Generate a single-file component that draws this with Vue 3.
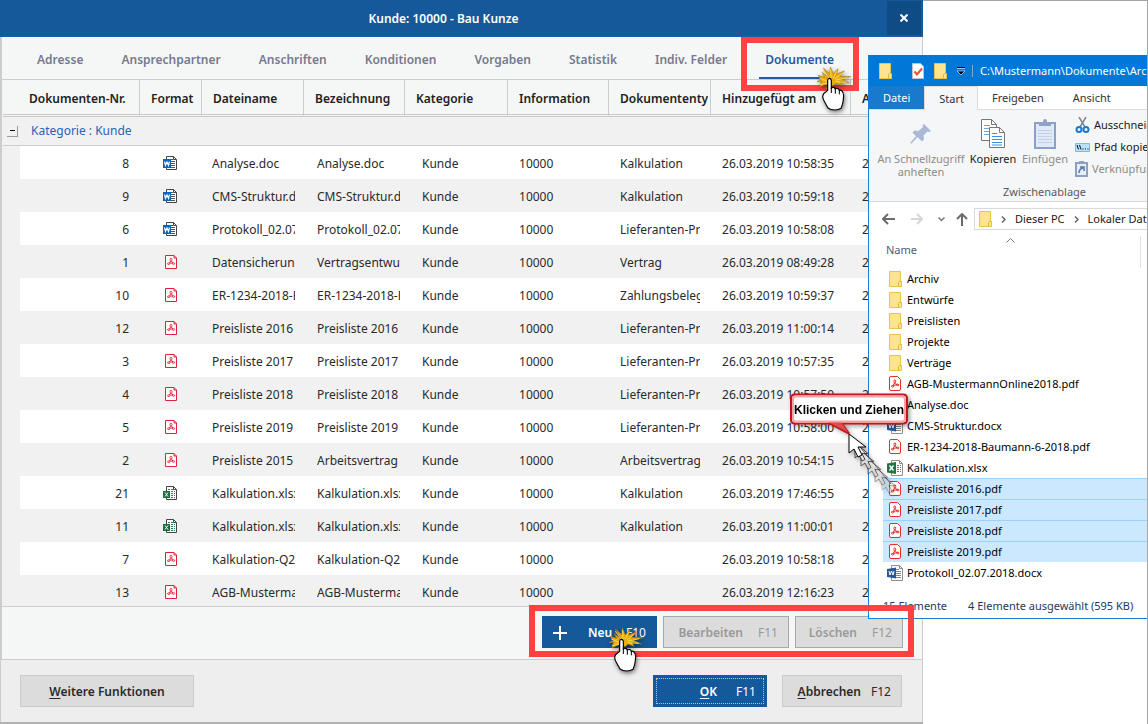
<script setup>
const tabs = ['Adresse', 'Ansprechpartner', 'Anschriften', 'Konditionen', 'Vorgaben', 'Statistik', 'Indiv. Felder', 'Dokumente']

const columns = ['Format', 'Dateiname', 'Bezeichnung', 'Kategorie', 'Information', 'Dokumententyp', 'Hinzugefügt am', 'A']

const rows = [
  [8, 'word', 'Analyse.doc', 'Analyse.doc', 'Kalkulation', '26.03.2019 10:58:35', '2'],
  [9, 'word', 'CMS-Struktur.docx', 'CMS-Struktur.docx', 'Kalkulation', '26.03.2019 10:59:18', '2'],
  [6, 'word', 'Protokoll_02.07.2018', 'Protokoll_02.07.2018', 'Lieferanten-Preis', '26.03.2019 10:58:08', '2'],
  [1, 'pdf', 'Datensicherung', 'Vertragsentwurf', 'Vertrag', '26.03.2019 08:49:28', '2'],
  [10, 'pdf', 'ER-1234-2018-Baumann', 'ER-1234-2018-Baumann', 'Zahlungsbelege', '26.03.2019 10:59:37', '2'],
  [12, 'pdf', 'Preisliste 2016', 'Preisliste 2016', 'Lieferanten-Preis', '26.03.2019 11:00:14', '2'],
  [3, 'pdf', 'Preisliste 2017', 'Preisliste 2017', 'Lieferanten-Preis', '26.03.2019 10:57:35', '2'],
  [4, 'pdf', 'Preisliste 2018', 'Preisliste 2018', 'Lieferanten-Preis', '26.03.2019 10:57:50', '2'],
  [5, 'pdf', 'Preisliste 2019', 'Preisliste 2019', 'Lieferanten-Preis', '26.03.2019 10:58:00', '2'],
  [2, 'pdf', 'Preisliste 2015', 'Arbeitsvertrag', 'Arbeitsvertrag', '26.03.2019 10:54:15', ''],
  [21, 'excel', 'Kalkulation.xlsx', 'Kalkulation.xlsx', 'Kalkulation', '26.03.2019 17:46:55', '2'],
  [11, 'excel', 'Kalkulation.xlsx', 'Kalkulation.xlsx', 'Kalkulation', '26.03.2019 11:00:01', '2'],
  [7, 'pdf', 'Kalkulation-Q2', 'Kalkulation-Q2', '', '26.03.2019 10:58:18', '2'],
  [13, 'pdf', 'AGB-Mustermann', 'AGB-Mustermann', '', '26.03.2019 12:16:23', '2']
]

const files = [
  ['folder', 'Archiv'],
  ['folder', 'Entwürfe'],
  ['folder', 'Preislisten'],
  ['folder', 'Projekte'],
  ['folder', 'Verträge'],
  ['acro', 'AGB-MustermannOnline2018.pdf'],
  ['doc', 'Analyse.doc'],
  ['doc', 'CMS-Struktur.docx'],
  ['acro', 'ER-1234-2018-Baumann-6-2018.pdf'],
  ['xls', 'Kalkulation.xlsx'],
  ['acro', 'Preisliste 2016.pdf', true],
  ['acro', 'Preisliste 2017.pdf', true],
  ['acro', 'Preisliste 2018.pdf', true],
  ['acro', 'Preisliste 2019.pdf', true],
  ['doc', 'Protokoll_02.07.2018.docx']
]
</script>

<template>
  <div class="desktop">
    <svg class="sprite" aria-hidden="true">
      <symbol id="i-word" viewBox="0 0 15 14">
        <path d="M3.5 3V.5h7l3 3v10h-10V11" fill="#fff" stroke="#444" />
        <path d="M10.5.5v3h3" fill="none" stroke="#444" />
        <path d="M8 3.5h2M8 5.5h4M8 7.5h4M8 9.5h4M8 11.5h4" stroke="#555" />
        <rect y="3" width="8" height="9" fill="#0f63b5" />
        <path d="M1.500 5.500l1 4 1.500-3.500 1.500 3.500 1-4" fill="none" stroke="#fff" stroke-width="1.200" />
      </symbol>
      <symbol id="i-excel" viewBox="0 0 15 14">
        <path d="M3.500 5V.5h7l3 3v10h-10V12" fill="#fff" stroke="#444" />
        <path d="M10.500.5v3h3" fill="none" stroke="#444" />
        <path d="M5 3.500h5M8 5.500h4M8 7.500h4M8 9.500h4M8 11.500h4" stroke="#33805a" stroke-dasharray="2 1" />
        <rect y="5" width="7" height="7" fill="#17703f" />
        <path d="M2 6.500l3 4M5 6.500l-3 4" stroke="#fff" />
      </symbol>
      <symbol id="i-pdf" viewBox="0 0 12 14">
        <path d="M.5.5h8.500l2.500 2.500v10.500h-11z" fill="#fff" stroke="#e0203c" />
        <path d="M9 .5v2.500h2.500" fill="none" stroke="#e0203c" />
        <g fill="none" stroke="#e0203c" stroke-width=".9">
          <ellipse cx="6" cy="4.700" rx="1" ry="1.500" />
          <path d="M5.600 6L4.500 8M6.400 6l1.500 2M4.500 8h3.400" />
          <ellipse cx="3.700" cy="8.700" rx="1.200" ry=".8" />
          <ellipse cx="8.500" cy="8.500" rx="1.200" ry=".8" />
        </g>
      </symbol>
      <symbol id="i-acro" viewBox="0 0 12 15">
        <path d="M2 .5h6.500l3 3V13q0 1.500-1.500 1.500H2Q.5 14.500.5 13V2Q.5.500 2 .5z" fill="#fff" stroke="#ee2b2b" />
        <g fill="none" stroke="#e32626">
          <ellipse cx="5.800" cy="5.400" rx=".9" ry="1.500" />
          <path d="M5.600 6.800L4.300 9.500M6.200 6.800l2 2.200M4.300 9.400l3.800-.7" />
          <ellipse cx="3.600" cy="10.200" rx="1.200" ry=".8" />
          <ellipse cx="8.800" cy="9" rx="1.200" ry=".8" />
        </g>
      </symbol>
      <symbol id="i-doc" viewBox="0 0 16 16">
        <path d="M4.500.5h8l3 3v12h-11z" fill="#fff" stroke="#8d8d8d" />
        <path d="M12.500.5v3h3M9 4.500h3M9 6.500h5M9 8.500h5M9 10.500h5M9 12.500h5" fill="none" stroke="#7e8794" />
        <path d="M0 4l9-1.500v11L0 12z" fill="#2b579a" />
        <path d="M2 6l1 4 1.500-4 1.500 4 1-4" fill="none" stroke="#fff" />
      </symbol>
      <symbol id="i-xls" viewBox="0 0 16 16">
        <path d="M4.500.5h8l3 3v12h-11z" fill="#fff" stroke="#8d8d8d" />
        <path d="M12.500.5v3h3" fill="none" stroke="#8d8d8d" />
        <path d="M10 5.500h4M10 7.500h4M10 9.500h4M10 11.500h4" stroke="#3d9a68" stroke-dasharray="2 1" />
        <path d="M0 3.500L9 2v12l-9-1.500z" fill="#217346" />
        <path d="M2.500 5.500l4 5M6.500 5.500l-4 5" stroke="#fff" stroke-width="1.400" />
      </symbol>
      <symbol id="i-folder" viewBox="0 0 13 16">
        <path d="M.5.500h11v10h1v5H.500z" fill="#ffe48e" stroke="#e9c34f" />
        <path d="M9.500 15.500v-4l1-1h2" fill="none" stroke="#e0b434" />
      </symbol>
      <symbol id="i-hand" viewBox="0 0 120 144">
        <path d="M41 38L22 6l19 17L43 3l9 21L66 8l-5 17 24-10-15 16 34 1-31 6 27 13-28-5 6 12-18-7-9 8-7-6-12 18 3-20-23 11L17 45 3 47l14-7L6 28l20 6-7-14z" fill="#e9ac13" stroke="#b57f0a" stroke-width="2" />
        <path d="M42 40l-20-27M45 38l-1-28M52 36l10-20M57 39l22-18M60 42l34-7M58 47l34 2M33 46L10 36M34 52L12 56" stroke="#ffd850" stroke-width="3" />
        <path d="M35 43q0-6 5-6t6 6v25q2-5 6-4 5 0 6 6 2-4 6-3 5 1 6 7 3-3 7 0 6 4 6 15-1 18-4 27l-4 11q-8 5-18 5-14 0-21-6-5-9-10-18-6-9-6-17 1-8 8-12l7-6z" fill="#fff" stroke="#000" stroke-width="3.500" stroke-linejoin="round" />
        <path d="M46 65v16M58 70v13M70 74v11" stroke="#000" stroke-width="3" />
      </symbol>
    </svg>

    <main class="dialog">
      <header class="titlebar">
        <h1>Kunde: 10000 - Bau Kunze</h1>
        <button class="close" aria-label="Schließen">
          <svg width="8" height="8" viewBox="0 0 8 8"><path d="M.5.5l7 7M7.500.5l-7 7" stroke="#fff" stroke-width="2" /></svg>
        </button>
      </header>

      <nav class="tabs">
        <button v-for="t in tabs" :key="t" :class="{ active: t === 'Dokumente' }">{{ t }}</button>
      </nav>

      <section class="grid">
        <table>
          <colgroup>
            <col class="c-indent" /><col class="c-nr" /><col class="c-format" /><col class="c-name" /><col class="c-desc" />
            <col class="c-cat" /><col class="c-info" /><col class="c-type" /><col class="c-date" /><col />
          </colgroup>
          <thead>
            <tr>
              <th colspan="2" class="first"><div>Dokumenten-Nr.</div></th>
              <th v-for="c in columns" :key="c"><div>{{ c }}</div></th>
            </tr>
          </thead>
          <tbody>
            <tr class="group">
              <td colspan="10">
                <div class="group-line">
                  <button class="collapse" aria-label="Gruppe zuklappen"><i></i></button>
                  <span>Kategorie : Kunde</span>
                </div>
              </td>
            </tr>
            <tr v-for="r in rows" :key="r[0]" class="item">
              <td class="indent"></td>
              <td class="nr">{{ r[0] }}</td>
              <td class="format">
                <svg :class="['ficon', r[1]]"><use :href="'#i-' + r[1]" /></svg>
              </td>
              <td class="name"><div>{{ r[2] }}</div></td>
              <td class="desc"><div>{{ r[3] }}</div></td>
              <td class="cat"><div>Kunde</div></td>
              <td><div>10000</div></td>
              <td><div>{{ r[4] }}</div></td>
              <td><div>{{ r[5] }}</div></td>
              <td><div>{{ r[6] }}</div></td>
            </tr>
          </tbody>
        </table>
      </section>

      <section class="toolbar">
        <button class="btn primary new">
          <svg width="14" height="14" viewBox="0 0 14 14"><path d="M7 0v14M0 7h14" stroke="#fff" stroke-width="2" /></svg>
          <b>Neu</b><span>F10</span>
        </button>
        <button class="btn edit" disabled><b>Bearbeiten</b><span>F11</span></button>
        <button class="btn delete" disabled><b>Löschen</b><span>F12</span></button>
      </section>

      <footer class="footer">
        <button class="btn soft more"><b><u>W</u>eitere Funktionen</b></button>
        <button class="btn primary ok"><b><u>O</u>K</b><span>F11</span></button>
        <button class="btn soft cancel"><b><u>A</u>bbrechen</b><span>F12</span></button>
      </footer>
    </main>

    <aside class="explorer">
      <header class="ex-title">
        <svg class="folder"><use href="#i-folder" /></svg>
        <i class="sep"></i>
        <svg width="12" height="16" viewBox="0 0 12 16">
          <path d="M.5.500h8l3 3v12H.500z" fill="#fff" stroke="#b9c4d0" />
          <path d="M2.500 8.500l2.500 3 5-6" fill="none" stroke="#e8502c" stroke-width="2" />
        </svg>
        <svg class="folder"><use href="#i-folder" /></svg>
        <span class="quick">
          <svg width="8" height="8" viewBox="0 0 8 8"><path d="M0 .5h8" stroke="#000" /><path d="M0 1.500h8M0 4h8L4 8z" stroke="#fff" stroke-width=".6" fill="#000" /></svg>
          <i class="sep"></i>
          <span>C:\Mustermann\Dokumente\Archiv</span>
        </span>
      </header>
      <nav class="ex-tabs">
        <button class="file">Datei</button>
        <button class="current">Start</button>
        <button class="share">Freigeben</button>
        <button>Ansicht</button>
      </nav>
      <section class="ribbon">
        <div class="ribbon-tools">
          <button class="tool pin" disabled>
            <svg width="22" height="22" viewBox="0 0 22 22"><path d="M14 1l7 7-2 1-1.500-.5-4 4 .5 4-2 2-4.500-4.500L1 21l-.5-1.500L6 13 2.500 9.500l2-2 4 .5 4.500-4-.5-1.500z" fill="#a9b9d6" /></svg>
            <span>An Schnellzugriff<br />anheften</span>
          </button>
          <button class="tool copy">
            <svg width="26" height="30" viewBox="0 0 26 30">
              <path d="M1.500.5h10l5 5v16h-15z" fill="#fff" stroke="#777" /><path d="M11.500.5v5h5" fill="none" stroke="#777" />
              <path d="M4 6.500h6M4 9.500h10M4 12.500h10M4 15.500h10" stroke="#70a9dc" />
              <path d="M9.500 8.500h10l5 5v15h-15z" fill="#fff" stroke="#777" /><path d="M19.500 8.500v5h5" fill="none" stroke="#777" />
              <path d="M12 14.500h5M12 17.500h10M12 20.500h10M12 23.500h10M12 26h10" stroke="#3d92dc" />
            </svg>
            <span>Kopieren</span>
          </button>
          <button class="tool paste" disabled>
            <svg width="22" height="30" viewBox="0 0 22 30">
              <path d="M1 4h20v25H1z" fill="#e0e9f6" stroke="#8ba0c6" stroke-width="2" />
              <path d="M5 7V3h4q0-3 2-3t2 3h4v4z" fill="#8ea3c6" />
              <path d="M4 11.500h14M4 14.500h14M4 17.500h14M4 20.500h14M4 23.500h14" stroke="#c3cfe4" />
            </svg>
            <span>Einfügen</span>
          </button>
          <div class="small-tools">
            <button>
              <svg width="15" height="16" viewBox="0 0 15 16"><path d="M4 0l6 10M11 0L5 10" stroke="#7b8792" stroke-width="1.500" /><circle cx="4" cy="12.500" r="2.500" fill="none" stroke="#1979ca" stroke-width="2" /><circle cx="11" cy="12.500" r="2.500" fill="none" stroke="#1979ca" stroke-width="2" /></svg>
              Ausschneiden
            </button>
            <button>
              <svg width="15" height="9" viewBox="0 0 15 9"><path d="M.5.500h14v8H.500z" fill="#b8e2fb" stroke="#7fb9dd" /><path d="M2 2l1.500 4.500M4.500 2L6 6.500M7.500 6h1M10 6h1M12.500 6h1" stroke="#111" /></svg>
              Pfad kopieren
            </button>
            <button disabled>
              <svg width="13" height="16" viewBox="0 0 13 16"><path d="M1 2h11v13H1z" fill="#e6edf8" stroke="#8da0c2" stroke-width="2" /><path d="M4 0h5v3H4z" fill="#8da0c2" /><path d="M4 12q0-4 4-5M5 6h4v4" fill="none" stroke="#5a76ab" stroke-width="1.500" /></svg>
              Verknüpfung
            </button>
          </div>
        </div>
        <div class="ribbon-label">Zwischenablage</div>
      </section>
      <nav class="address">
        <button aria-label="Zurück"><svg width="13" height="12" viewBox="0 0 13 12"><path d="M13 6H1M6 1L1 6l5 5" fill="none" stroke="#6c6c6c" stroke-width="2" /></svg></button>
        <button aria-label="Vorwärts"><svg width="13" height="12" viewBox="0 0 13 12"><path d="M1 6h11M7 1l5 5-5 5" fill="none" stroke="#d6d6d6" stroke-width="2" /></svg></button>
        <button aria-label="Verlauf"><svg width="7" height="5" viewBox="0 0 7 5"><path d="M.5.500l3 3 3-3" fill="none" stroke="#777" stroke-width="1.500" /></svg></button>
        <button class="up" aria-label="Nach oben"><svg width="12" height="13" viewBox="0 0 12 13"><path d="M6 13V1M1 6l5-5 5 5" fill="none" stroke="#6c6c6c" stroke-width="2" /></svg></button>
        <div class="crumbs">
          <svg class="folder"><use href="#i-folder" /></svg>
          <svg class="chev" width="5" height="7" viewBox="0 0 5 7"><path d="M1 .5l3 3-3 3" fill="none" stroke="#666" stroke-width="1.500" /></svg>
          <span>Dieser PC</span>
          <svg class="chev" width="5" height="7" viewBox="0 0 5 7"><path d="M1 .5l3 3-3 3" fill="none" stroke="#666" stroke-width="1.500" /></svg>
          <span>Lokaler Datenträger</span>
        </div>
      </nav>
      <div class="list-head">
        <span>Name</span>
        <svg width="9" height="5" viewBox="0 0 9 5"><path d="M.5 4.500l4-4 4 4" fill="none" stroke="#777" /></svg>
      </div>
      <ul class="files">
        <li v-for="f in files" :key="f[1]" :class="{ selected: f[2] }">
          <span class="slot"><svg :class="f[0]"><use :href="'#i-' + f[0]" /></svg></span>{{ f[1] }}
        </li>
      </ul>
      <footer class="status">
        <span>15 Elemente</span>
        <span>4 Elemente ausgewählt (595 KB)</span>
      </footer>
    </aside>

    <div class="mark mark-tab"></div>
    <div class="mark mark-actions"></div>
    <svg class="hand hand-tab"><use href="#i-hand" /></svg>
    <svg class="hand hand-new"><use href="#i-hand" /></svg>

    <div class="callout">
      <svg width="120" height="110" viewBox="0 0 120 110" aria-hidden="true">
        <defs>
          <linearGradient id="pointer" x1="0" y1="0" x2="0" y2="1"><stop offset="0" stop-color="#fff" /><stop offset="1" stop-color="#ddd" /></linearGradient>
          <path id="arrow" d="M0 0v19l5-4 4 8 4-2-4-8h8z" />
          <path id="arrow-small" d="M0 0v15l4-3 3 6 3-1.500-3-6h6z" />
        </defs>
        <g fill="url(#pointer)" stroke="#333">
          <use href="#arrow-small" x="92" y="82" opacity=".3" />
          <use href="#arrow-small" x="85" y="74" opacity=".45" />
          <use href="#arrow-small" x="78" y="66" opacity=".6" />
          <use href="#arrow-small" x="71" y="58" opacity=".75" />
          <use href="#arrow-small" x="65" y="50" opacity=".9" />
          <path d="M59 41l42 50" opacity=".7" />
        </g>
        <use href="#arrow" x="59" y="41" fill="#fff" stroke="#000" />
        <path d="M5 1.500h108q4 0 4 4v21q0 4-4 4H52l7 10-19-10H5q-4 0-4-4v-21q0-4 4-4z" fill="#fff" stroke="#c3161c" stroke-width="2" />
        <path d="M38 29h13l7 10z" fill="#e24a4e" />
        <rect x="3" y="3.500" width="112" height="25" rx="3" fill="none" stroke="#f7a3a3" stroke-width="2" />
      </svg>
      <strong>Klicken und Ziehen</strong>
    </div>
  </div>
</template>

<style>
body {
  margin: 0;
}
</style>

<style scoped>
* {
  box-sizing: border-box;
}
.desktop {
  position: relative;
  height: 100vh;
  min-height: 480px;
  overflow: hidden;
  background: linear-gradient(#a5a5a5, #a5a5a5) top / 100% 1px no-repeat #fff;
  border-right: 1px solid #a5a5a5;
  font: 12px/16px "Noto Sans", "Open Sans", sans-serif;
  color: #2a2a2a;
}
.sprite {
  position: absolute;
  width: 0;
  height: 0;
}
button {
  margin: 0;
  padding: 0;
  border: 0;
  background: none;
  font: inherit;
  color: inherit;
}

/* Customer dialog */
.dialog {
  display: flex;
  flex-direction: column;
  height: 100%;
  margin-right: 224px;
  background: #eee;
  border-bottom: 2px solid #b2b2b2;
}
.titlebar {
  display: flex;
  flex: none;
  height: 37px;
  background: #15599a;
  border-bottom: 1px solid #1a5cad;
  color: #fff;
}
.titlebar h1 {
  flex: 1;
  margin: 0;
  font-size: 12px;
  line-height: 38px;
  font-weight: 600;
  text-align: center;
}
.close {
  display: flex;
  width: 34px;
  height: 34px;
  margin: 1px 2px 0 0;
  align-items: center;
  justify-content: center;
  background: #0f4c86;
}
.tabs {
  display: flex;
  flex: none;
  height: 43px;
  padding-left: 29px;
  gap: 26px;
  background: #f5f7f6;
  border: solid #cdcdcd;
  border-width: 0 1px 1px 2px;
}
.tabs button {
  padding: 5px 6px 0;
  font-weight: 600;
  color: #76798f;
  border-bottom: 2px solid transparent;
}
.tabs .active {
  color: #2659a8;
  border-color: #2659a8;
}
.grid {
  flex: 1 1 0;
  min-height: 0;
  overflow: hidden;
  border: solid #cdcdcd;
  border-width: 0 1px 1px 2px;
  background: #f1f1f1;
  padding-left: 1px;
}
table {
  width: 100%;
  table-layout: fixed;
  border-collapse: separate;
  border-spacing: 0;
}
.c-indent { width: 17px; }
.c-nr { width: 120px; }
.c-format { width: 62px; }
.c-name { width: 102px; }
.c-desc { width: 101px; }
.c-cat { width: 103px; }
.c-info { width: 101px; }
.c-type { width: 102px; }
.c-date { width: 140px; }
th {
  height: 37px;
  padding: 3px 2px 0 11px;
  text-align: left;
  font-weight: 600;
  color: #222;
  background: #f5f7f6;
  border-right: 1px solid #cdcdcd;
  border-bottom: 3px double #c9c9c9;
}
th.first {
  padding-left: 26px;
}
td {
  height: 33px;
  padding: 0 11px;
  background: #fff;
}
th div,
td div {
  overflow: hidden;
  white-space: nowrap;
}
.item:nth-child(odd) td {
  background: #f1f1f1;
}
.item .indent {
  background: #f1f1f1;
}
.group td {
  height: 29px;
  padding: 0 0 0 4px;
  background: #f1f1f1;
  border-bottom: 1px solid #cdcdcd;
}
.group-line {
  display: flex;
  align-items: center;
  gap: 13px;
  color: #2a62b8;
}
.collapse {
  display: flex;
  width: 11px;
  height: 11px;
  align-items: center;
  justify-content: center;
  border: solid #999;
  border-width: 0 1px 1px 0;
}
.collapse i {
  width: 5px;
  height: 1px;
  background: #111;
}
.item td {
  padding-top: 2px;
}
.item .nr {
  text-align: right;
}
.item .format {
  padding: 0 0 0 23px;
}
.item .name {
  padding-left: 10px;
  padding-right: 9px;
}
.item .desc {
  padding-left: 13px;
  padding-right: 5px;
}
.item .cat {
  padding-left: 17px;
}
.ficon {
  display: block;
  width: 15px;
  height: 14px;
}
.ficon.pdf {
  width: 12px;
  margin-left: 2px;
}
.toolbar {
  display: flex;
  flex: none;
  justify-content: flex-end;
  gap: 6px;
  height: 53px;
  padding: 9px 19px 0 0;
  background: #f5f7f6;
  border: solid #cdcdcd;
  border-width: 0 1px 1px 2px;
}
.footer {
  display: flex;
  flex: none;
  gap: 15px;
  height: 62px;
  padding: 15px 20px 0 19px;
  border: solid #cdcdcd;
  border-width: 0 1px;
}
.btn {
  display: flex;
  height: 32px;
  padding: 2px 10px 0;
  align-items: center;
  justify-content: flex-end;
  background: #dcdcdc;
  border: 1px solid #a8a8a8;
}
.btn b {
  font-weight: 600;
}
.btn:disabled {
  color: #999;
}
.btn.soft {
  border-color: #cbcbcb;
}
.btn.primary {
  color: #fff;
  background: #15599a;
  border-color: #15599a;
}
.btn u {
  text-underline-offset: 2px;
}
.new {
  width: 115px;
}
.new b {
  flex: 1;
  padding-left: 21px;
  text-align: left;
}
.edit {
  width: 126px;
  gap: 15px;
}
.delete {
  width: 108px;
  gap: 15px;
}
.btn.more {
  width: 174px;
  margin-right: auto;
  justify-content: center;
}
.ok {
  width: 114px;
  gap: 19px;
  outline: 1px dotted #e5b97f;
  outline-offset: -4px;
}
.btn.cancel {
  width: 120px;
  gap: 10px;
}

/* File explorer window */
.explorer {
  position: absolute;
  top: 55px;
  left: 868px;
  right: 0;
  height: 564px;
  overflow: hidden;
  display: flex;
  flex-direction: column;
  background: #fff;
  border: solid #1a80d9;
  border-width: 0 0 1px 1px;
  font-size: 11px;
  color: #1a1a1a;
  white-space: nowrap;
}
.explorer svg {
  flex: none;
}
.folder {
  width: 13px;
  height: 16px;
}
.ex-title {
  display: flex;
  flex: none;
  height: 31px;
  padding-left: 10px;
  gap: 10px;
  align-items: center;
  background: #0078d7;
  color: #fff;
}
.sep {
  width: 1px;
  height: 12px;
  background: #83a9cf;
}
.quick {
  display: flex;
  gap: 7px;
  align-items: center;
}
.ex-tabs {
  display: flex;
  flex: none;
  height: 24px;
}
.ex-tabs button {
  padding: 0 14px;
  color: #333;
  border-bottom: 1px solid #dcdcdc;
}
.ex-tabs button:last-child {
  flex: 1;
  padding-left: 15px;
  text-align: left;
}
.ex-tabs .file {
  background: #1979ca;
  color: #fff;
}
.ex-tabs .current {
  padding: 0 13px 0 14px;
  background: #f5f6f7;
  border: solid #dcdcdc;
  border-width: 1px 1px 0;
}
.ribbon {
  flex: none;
  height: 92px;
  background: #f5f6f7;
  border-bottom: 1px solid #d9dadb;
}
.ribbon-tools {
  display: flex;
  height: 74px;
  padding-left: 6px;
}
.ribbon button:disabled {
  color: #8c8c8c;
}
.tool {
  display: flex;
  flex: none;
  flex-direction: column;
  align-items: center;
  padding-top: 9px;
  line-height: 13px;
}
.tool svg {
  margin-bottom: 3px;
}
.pin {
  width: 92px;
  padding-top: 13px;
}
.pin svg {
  margin-bottom: 7px;
}
.copy {
  width: 52px;
}
.paste {
  width: 52px;
}
.small-tools {
  display: flex;
  flex-direction: column;
  padding: 4px 0 0 4px;
}
.small-tools button {
  display: flex;
  height: 22px;
  align-items: center;
  gap: 4px;
}
.ribbon-label {
  padding-left: 134px;
  color: #5a5a5a;
}
.address {
  display: flex;
  flex: none;
  align-items: center;
  gap: 15px;
  height: 34px;
  padding-left: 13px;
}
.address button {
  display: flex;
}
.address .up {
  margin-left: -4px;
}
.crumbs {
  display: flex;
  flex: 1;
  height: 22px;
  margin-left: -9px;
  padding-left: 4px;
  gap: 9px;
  align-items: center;
  border: 1px solid #d9d9d9;
  border-right: 0;
}
.list-head {
  display: flex;
  flex: none;
  height: 32px;
  margin-right: 6px;
  padding: 0 0 4px 17px;
  align-items: center;
  gap: 89px;
  color: #4c607a;
  border-right: 1px solid #e2e2e2;
}
.list-head svg {
  align-self: flex-start;
  margin-top: 2px;
}
.files {
  flex: none;
  margin: 0;
  padding: 0 0 0 14px;
  list-style: none;
}
.files li {
  display: flex;
  height: 21px;
  padding-left: 4px;
  align-items: center;
  color: #000;
}
.files .selected {
  background: #cce8ff;
  box-shadow: inset 0 1px #99d1ff;
}
.slot {
  display: flex;
  flex: none;
  width: 16px;
  margin-right: 4px;
  justify-content: center;
}
.slot svg {
  width: 16px;
  height: 16px;
}
.slot .folder {
  width: 13px;
}
.slot .acro {
  width: 12px;
  height: 15px;
}
.status {
  display: flex;
  gap: 21px;
  margin-top: auto;
  padding: 0 0 4px 14px;
  color: #1e395b;
}

/* Annotations drawn over the windows */
.mark {
  position: absolute;
  border: 6px solid #ff4141;
}
.mark-tab {
  left: 741px;
  top: 37px;
  width: 118px;
  height: 54px;
}
.mark-actions {
  left: 529px;
  top: 605px;
  width: 385px;
  height: 52px;
}
.hand {
  position: absolute;
  width: 40px;
  height: 48px;
  filter: drop-shadow(1px 2px 2px rgba(0, 0, 0, 0.5));
}
.hand-tab {
  left: 816px;
  top: 66px;
}
.hand-new {
  left: 608px;
  top: 627px;
}
.callout {
  position: absolute;
  left: 790px;
  top: 393px;
  width: 120px;
  filter: drop-shadow(2px 2px 2px rgba(0, 0, 0, 0.35));
}
.callout svg {
  display: block;
}
.callout strong {
  position: absolute;
  top: 9px;
  left: 4px;
  font: bold 12px/16px "Liberation Sans", Arial, sans-serif;
  white-space: nowrap;
  color: #000;
}
</style>
